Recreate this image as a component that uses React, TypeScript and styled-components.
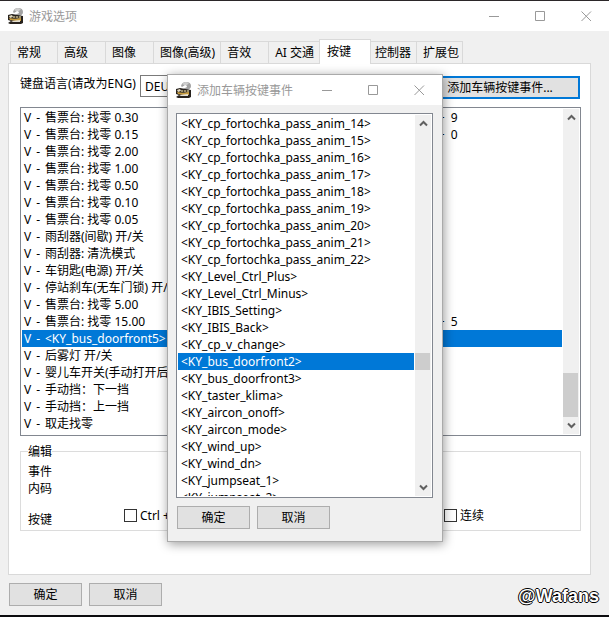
import React from 'react';
import styled, { createGlobalStyle, css } from 'styled-components';

const GlobalStyle = createGlobalStyle`
  *, *::before, *::after { box-sizing: border-box; }
  body {
    margin: 0;
    background: #f0f0f0;
  }
  body, button, select, input {
    font-family: 'Noto Sans', 'Noto Sans CJK SC', sans-serif;
    font-size: 12px;
    line-height: 17px;
    color: #000;
  }
`;

const Window = styled.div`
  position: relative;
  display: flex;
  flex-direction: column;
  min-height: 100vh;
  background: #f0f0f0;
  border-top: 1px solid #2b2729;
  border-bottom: 2px solid #0c0c0e;
`;

const TitleBar = styled.header`
  display: flex;
  align-items: center;
  height: 30px;
  padding-left: 8px;
  background: #fff;
  color: #999;
`;

const Title = styled.h1`
  flex: 1;
  margin: 0 0 0 4px;
  font-size: 12px;
  font-weight: 400;
`;

const CaptionButton = styled.button`
  display: flex;
  align-items: center;
  justify-content: center;
  width: 46px;
  height: 30px;
  padding: 0;
  border: 0;
  background: transparent;
`;

const TabStrip = styled.div`
  display: flex;
  align-items: flex-end;
  margin: 8px 18px 0 10px;
`;

const Tab = styled.button<{ $active?: boolean }>`
  min-width: 48px;
  height: 22px;
  padding: 0 5px 0 6px;
  border: 1px solid #d9d9d9;
  border-width: 1px 0 0 1px;
  background: #f0f0f0;
  text-align: left;
  white-space: nowrap;
  &:first-child { min-width: 47px; }
  &:last-child {
    min-width: 0;
    padding-right: 3px;
    border-right-width: 1px;
  }
  ${(p) =>
    p.$active &&
    css`
      position: relative;
      min-width: 52px;
      height: 25px;
      margin-bottom: -1px;
      padding: 0 7px 2px;
      border-right-width: 1px;
      background: #fff;
      & + button {
        min-width: 0;
        padding: 0 5px 0 4px;
        border-left-width: 0;
      }
    `}
`;

const Panel = styled.main`
  flex: 1;
  margin: 0 18px 0 8px;
  padding: 11px 9px 0 11px;
  border: 1px solid #d9d9d9;
  background: #fff;
`;

const LanguageRow = styled.div`
  display: flex;
  align-items: flex-start;
  margin-bottom: 8px;
`;

const LanguageLabel = styled.label`
  width: 120px;
  white-space: nowrap;
`;

const LanguageSelect = styled.select`
  width: 160px;
  height: 22px;
  padding: 0 4px;
  border: 1px solid #7a7a7a;
  appearance: none;
  background: #fff;
`;

const PushButton = styled.button<{ $focused?: boolean }>`
  min-width: 73px;
  height: 23px;
  padding: 0;
  border: 1px solid #adadad;
  background: #e1e1e1;
  line-height: 20px;
  ${(p) =>
    p.$focused &&
    css`
      width: 160px;
      margin: 1px 1px 0 auto;
      border: 2px solid #0078d7;
    `}
`;

const ListFrame = styled.div<{ $height: number }>`
  display: flex;
  gap: 1px;
  height: ${(p) => p.$height}px;
  padding: 1px;
  border: 1px solid #828790;
  background: #fff;
`;

const Items = styled.ul`
  flex: 1;
  margin: 0;
  padding: 0;
  overflow: hidden;
  list-style: none;
`;

const Item = styled.li<{ $selected?: boolean }>`
  display: flex;
  height: 17px;
  padding-left: 2px;
  white-space: pre;
  color: ${(p) => (p.$selected ? '#fff' : '#000')};
  background: ${(p) => (p.$selected ? '#0078d7' : 'transparent')};
`;

const KeyItem = styled(Item)`
  padding-left: 3px;
`;

const Category = styled.span`
  display: flex;
  flex: none;
  gap: 5px;
  width: 21px;
`;

const EventName = styled.span`
  width: 73%;
  overflow: hidden;
`;

const ScrollTrack = styled.div`
  display: grid;
  width: 16px;
  background: #f0f0f0;
`;

const ScrollButton = styled.button`
  display: flex;
  align-items: center;
  justify-content: center;
  height: 17px;
  padding: 0;
  border: 0;
  background: transparent;
`;

const DownButton = styled(ScrollButton)`
  grid-row: -2;
`;

const EventTrack = styled(ScrollTrack)`
  grid-template-rows: 17px 247px 44px 17px;
`;

const VehicleTrack = styled(ScrollTrack)`
  grid-template-rows: 17px 221px 17px 1fr 17px;
`;

const Thumb = styled.div`
  grid-row: 3;
  width: 15px;
  background: #cdcdcd;
`;

const EditGroup = styled.fieldset`
  min-width: 0;
  margin: 7px 0 0;
  padding: 3px 7px 2px;
  border: 1px solid #dcdcdc;
`;

const Legend = styled.legend`
  padding: 0;
`;

const Detail = styled.p`
  margin: 0;
`;

const KeyRow = styled.div`
  display: grid;
  grid-template-columns: 96px 320px 1fr;
  align-items: start;
  margin-top: 10px;
`;

const KeyLabel = styled.span`
  padding-top: 4px;
`;

const CheckLabel = styled.label`
  display: flex;
  align-items: center;
  gap: 3px;
  white-space: pre;
`;

const CheckBox = styled.input`
  appearance: none;
  width: 13px;
  height: 13px;
  margin: 0;
  border: 1px solid #333;
  background: #fff;
`;

const Footer = styled.footer`
  display: flex;
  align-items: center;
  gap: 7px;
  padding: 8px 10px 9px 9px;
`;

const Watermark = styled.span`
  margin-left: auto;
  padding-top: 3px;
  font: bold 18px/20px 'Liberation Sans', sans-serif;
  color: #fff;
  text-shadow: 1px 0 #000, -1px 0 #000, 0 1px #000, 0 -1px #000;
`;

const Dialog = styled.section`
  position: absolute;
  top: 73px;
  left: 167px;
  width: 276px;
  border: 1px solid #aaa;
  background: #f0f0f0;
  box-shadow: 1px 2px 10px rgba(0, 0, 0, 0.4);
`;

const DialogBody = styled.div`
  padding: 8px 9px 12px 8px;
`;

const DialogActions = styled.div`
  display: flex;
  gap: 7px;
  padding: 8px 1px 0;
`;

const BusIcon = () => (
  <svg width="17" height="17" viewBox="0 0 17 17" aria-hidden="true">
    <path d="M5 4Q6 0 10 0Q15 0 15 4Q15 7 11 8H15V10H7V7L11 5Q11 3 9 3L6 5Z" fill="#a2a2a2" />
    <path d="M6 2Q8 0 10 0L13 1L11 3H8Z" fill="#cecece" />
    <path d="M0 7L4 6L15 8V15L13 16H2L0 15L3 13L0 12Z" fill="#27221d" />
    <path d="M1 8L4 7L5 9L2 10Z" fill="#e3dac0" />
    <path d="M5 8H13V11L5 10Z" fill="#9c9070" />
    <path d="M7 8H8V10H7ZM10 8H11V10H10Z" fill="#49402c" />
    <path d="M1 10L8 11L13 10V13H8L2 12Z" fill="#c89c3d" />
    <path d="M3 13L12 12V14H5Z" fill="#e4dfd2" />
  </svg>
);

const Glyph = ({ d }: { d: string }) => (
  <svg width="11" height="11" viewBox="0 0 11 11" fill="none" stroke="#999" aria-hidden="true">
    <path d={d} />
  </svg>
);

const Caption = ({ title }: { title: string }) => (
  <TitleBar>
    <BusIcon />
    <Title>{title}</Title>
    <CaptionButton aria-label="最小化"><Glyph d="M0 5.5H10" /></CaptionButton>
    <CaptionButton aria-label="最大化"><Glyph d="M.5 .5H9.5V9.5H.5Z" /></CaptionButton>
    <CaptionButton aria-label="关闭"><Glyph d="M.5 .5L10 10M10 .5L.5 10" /></CaptionButton>
  </TitleBar>
);

const Chevron = ({ down }: { down?: boolean }) => (
  <svg width="9" height="7" viewBox="0 0 9 7" fill="none" stroke="#606060" strokeWidth="2" aria-hidden="true">
    <path d={down ? 'M1 1.5L4.5 5L8 1.5' : 'M1 5.5L4.5 2L8 5.5'} />
  </svg>
);

const ScrollParts = () => (
  <>
    <ScrollButton aria-label="向上滚动"><Chevron /></ScrollButton>
    <Thumb />
    <DownButton aria-label="向下滚动"><Chevron down /></DownButton>
  </>
);

const tabs = ['常规', '高级', '图像', '图像(高级)', '音效', 'AI 交通', '按键', '控制器', '扩展包'];

const events: [string, string?][] = [
  ['售票台: 找零 0.30', '+  9'],
  ['售票台: 找零 0.15', '+  0'],
  ['售票台: 找零 2.00'],
  ['售票台: 找零 1.00'],
  ['售票台: 找零 0.50'],
  ['售票台: 找零 0.10'],
  ['售票台: 找零 0.05'],
  ['雨刮器(间歇) 开/关'],
  ['雨刮器: 清洗模式'],
  ['车钥匙(电源) 开/关'],
  ['停站刹车(无车门锁) 开/关'],
  ['售票台: 找零 5.00'],
  ['售票台: 找零 15.00', '+  5'],
  ['<KY_bus_doorfront5>'],
  ['后雾灯 开/关'],
  ['婴儿车开关(手动打开后门)'],
  ['手动挡：下一挡'],
  ['手动挡：上一挡'],
  ['取走找零'],
];

const vehicleKeys = [
  ...[14, 15, 16, 17, 18, 19, 20, 21, 22].map((n) => `cp_fortochka_pass_anim_${n}`),
  'Level_Ctrl_Plus', 'Level_Ctrl_Minus', 'IBIS_Setting', 'IBIS_Back', 'cp_v_change',
  'bus_doorfront2', 'bus_doorfront3', 'taster_klima', 'aircon_onoff', 'aircon_mode',
  'wind_up', 'wind_dn', 'jumpseat_1', 'jumpseat_2',
];

export default function App() {
  return (
    <>
      <GlobalStyle />
      <Window>
        <Caption title="游戏选项" />
        <TabStrip role="tablist">
          {tabs.map((name) => (
            <Tab key={name} role="tab" aria-selected={name === '按键'} $active={name === '按键'}>{name}</Tab>
          ))}
        </TabStrip>
        <Panel>
          <LanguageRow>
            <LanguageLabel htmlFor="language">键盘语言(请改为ENG)</LanguageLabel>
            <LanguageSelect id="language"><option>DEU</option></LanguageSelect>
            <PushButton $focused>添加车辆按键事件...</PushButton>
          </LanguageRow>
          <ListFrame $height={329}>
            <Items role="listbox" aria-label="按键事件">
              {events.map(([name, key]) => {
                const selected = name.startsWith('<');
                return (
                  <Item key={name} role="option" aria-selected={selected} $selected={selected}>
                    <Category><span>V</span><span>-</span></Category>
                    <EventName>{name}</EventName>
                    {key && <span>{key}</span>}
                  </Item>
                );
              })}
            </Items>
            <EventTrack><ScrollParts /></EventTrack>
          </ListFrame>
          <EditGroup>
            <Legend>编辑</Legend>
            <Detail>事件</Detail>
            <Detail>内码</Detail>
            <KeyRow>
              <KeyLabel>按键</KeyLabel>
              <CheckLabel><CheckBox type="checkbox" />Ctrl +</CheckLabel>
              <CheckLabel><CheckBox type="checkbox" />连续</CheckLabel>
            </KeyRow>
          </EditGroup>
        </Panel>
        <Footer>
          <PushButton>确定</PushButton>
          <PushButton>取消</PushButton>
          <Watermark>@Wafans</Watermark>
        </Footer>
        <Dialog role="dialog" aria-label="添加车辆按键事件">
          <Caption title="添加车辆按键事件" />
          <DialogBody>
            <ListFrame $height={385}>
              <Items role="listbox" aria-label="车辆按键事件">
                {vehicleKeys.map((key) => {
                  const selected = key === 'bus_doorfront2';
                  return (
                    <KeyItem key={key} role="option" aria-selected={selected} $selected={selected}>{`<KY_${key}>`}</KeyItem>
                  );
                })}
              </Items>
              <VehicleTrack><ScrollParts /></VehicleTrack>
            </ListFrame>
            <DialogActions>
              <PushButton>确定</PushButton>
              <PushButton>取消</PushButton>
            </DialogActions>
          </DialogBody>
        </Dialog>
      </Window>
    </>
  );
}
